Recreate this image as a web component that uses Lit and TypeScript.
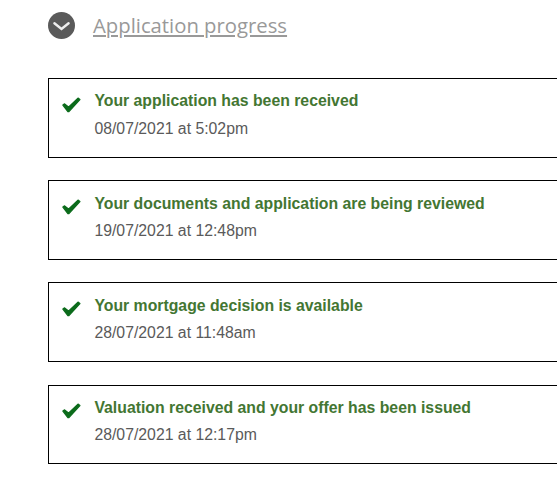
import { LitElement, html, css } from "lit";
import { customElement, property } from "lit/decorators.js";

@customElement("progress-step")
class ProgressStep extends LitElement {
  @property() heading = "";
  @property() when = "";
  static styles = css`
    :host { display: flex; box-sizing: border-box; height: 79.6px; border: 1px solid #000; padding: 11.4px 0 0 12px; }
    svg { flex: none; width: 21px; height: 18px; margin: 5.2px 12.4px 0 0; }
    .title { font-weight: 700; color: #437632; line-height: 22px; }
    .date { color: #5a5a5a; line-height: 22px; margin-top: 5.3px; }
    .text { font-size: 15.8px; white-space: nowrap; }
  `;
  render() {
    return html`<svg viewBox="0 0 21 18"><path d="M1.9 9L3.6 7.9L7.5 11.1L17 2.1L18.9 3.5L7.9 15.6L6.9 15.6Z" fill="#0b6b1b" stroke="#0b6b1b" stroke-width="1.3" stroke-linejoin="round"/></svg>
      <div class="text"><div class="title">${this.heading}</div><div class="date">${this.when}</div></div>`;
  }
}

@customElement("app-root")
class AppRoot extends LitElement {
  static styles = css`
    :host { display: block; box-sizing: border-box; height: 477px; overflow: hidden; background: #fff; padding: 12px 0 0 48px; font-family: "Liberation Sans", Arial, sans-serif; }
    .header { display: flex; height: 27px; }
    .header svg { flex: none; width: 27px; height: 27px; margin-right: 18px; }
    .link { font: 20.3px/27px "Open Sans", sans-serif; color: #999; text-decoration: underline; white-space: nowrap; }
    .steps { display: grid; grid-auto-rows: 79.6px; row-gap: 22.6px; margin-top: 39px; width: 530px; }
  `;
  steps = [
    ["Your application has been received", "08/07/2021 at 5:02pm"],
    ["Your documents and application are being reviewed", "19/07/2021 at 12:48pm"],
    ["Your mortgage decision is available", "28/07/2021 at 11:48am"],
    ["Valuation received and your offer has been issued", "28/07/2021 at 12:17pm"],
  ];
  render() {
    return html`<div class="header">
        <svg viewBox="0 0 27 27"><circle cx="13.5" cy="13.5" r="13.5" fill="#5a5a5a"/><path d="M6.4 11.2L13.5 17L20.6 11.2" fill="none" stroke="#eee" stroke-width="2.4" stroke-linecap="round"/></svg>
        <span class="link">Application progress</span>
      </div>
      <div class="steps">${this.steps.map(([h, w]) => html`<progress-step .heading=${h} .when=${w}></progress-step>`)}</div>`;
  }
}
